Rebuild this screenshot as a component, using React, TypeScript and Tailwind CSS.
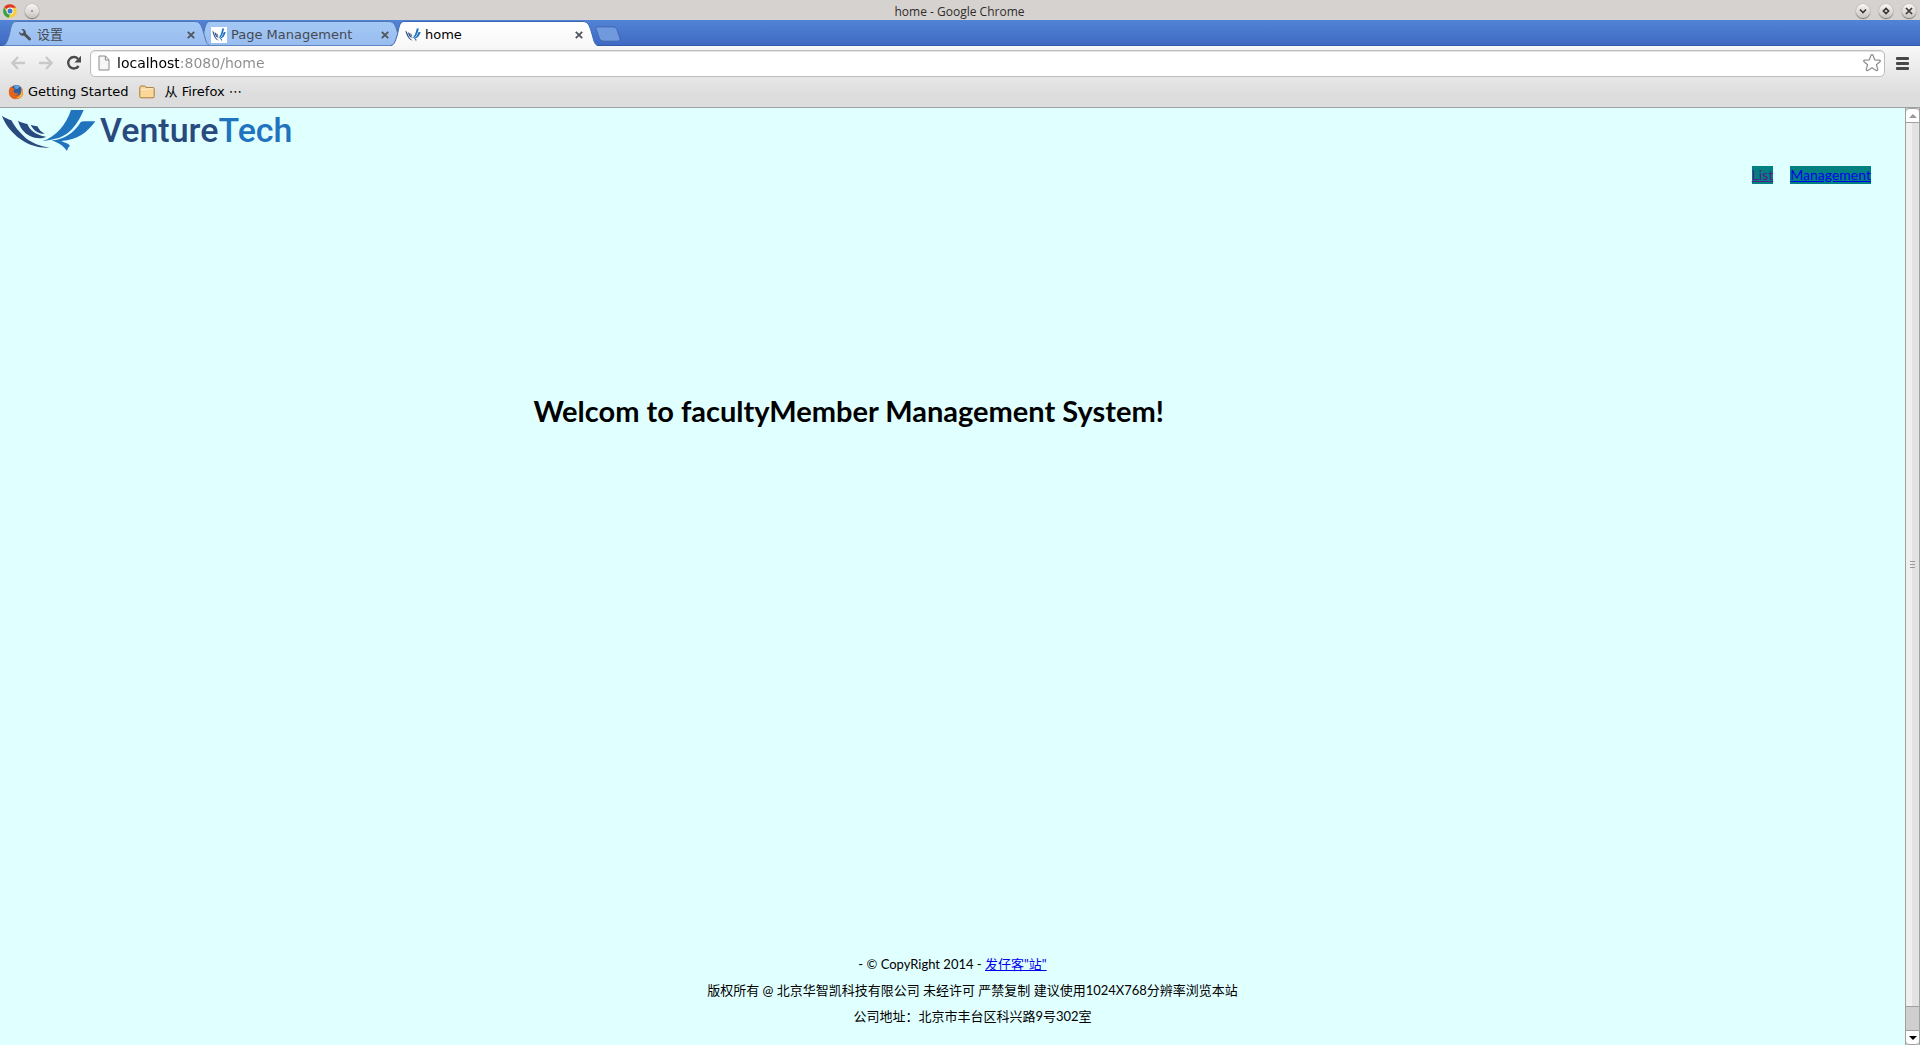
import React, { useState } from 'react';

function BirdMark({ className, stretch }: { className: string; stretch?: boolean }) {
  return (
    <svg viewBox="0 9 291 135" preserveAspectRatio={stretch ? 'none' : 'xMidYMid meet'} className={className} aria-hidden="true">
      <g fill="#284a7e">
        <path d="M6 32 C14 38 24 42 34 46 C42 62 56 80 76 98 C96 114 120 123 149 128 C118 130 88 122 62 103 C36 84 16 60 6 32Z" />
        <path d="M54 47 C62 53 74 54 82 57 C90 76 106 90 138 95 C128 101 108 102 90 93 C72 84 60 68 54 47Z" />
        <path d="M92 59 C98 62 106 62 112 64 C117 74 124 82 134 86 C120 88 100 78 92 59Z" />
      </g>
      <g fill="#1f74bd">
        <path d="M213 15 L251 15 C236 52 212 86 178 98 C162 103 144 105 127 109 C168 94 198 60 213 15Z" />
        <path d="M243 50 C256 48 272 49 286 49 C262 82 232 106 184 108 C194 114 204 114 210 122 C204 127 203 132 201 138 C190 121 172 112 154 106 C192 104 222 84 243 50Z" />
      </g>
    </svg>
  );
}

function ChromeIcon() {
  return (
    <svg viewBox="0 0 16 16" className="h-3.5 w-3.5" aria-hidden="true">
      <circle cx="8" cy="8" r="7.8" fill="#f8cf3a" />
      <path d="M8 8 L1.2 4 A7.8 7.8 0 0 1 14.8 4.4 L8 4.4Z" fill="#e0392b" />
      <path d="M1.2 4 L5 10 L8 11.6 L6.6 15.7 A7.8 7.8 0 0 1 1.2 4Z" fill="#38a146" />
      <circle cx="8" cy="8" r="3.9" fill="#fff" />
      <circle cx="8" cy="8" r="2.9" fill="#3c7bd0" />
    </svg>
  );
}

function WindowButton({ label, children }: { label: string; children: React.ReactNode }) {
  return (
    <button
      type="button"
      aria-label={label}
      className="flex h-3.5 w-3.5 items-center justify-center rounded-full bg-linear-to-b from-[#f8f7f6] to-[#c9c5c1] shadow-[0_1px_1px_#77726e,0_0_1px_#77726e]"
    >
      <svg viewBox="0 0 14 14" className="h-3.5 w-3.5" fill="none" stroke="#3a3a3a" strokeWidth="1.7" aria-hidden="true">
        {children}
      </svg>
    </button>
  );
}

function WrenchIcon() {
  return (
    <svg viewBox="0 0 16 16" className="h-4 w-4" aria-hidden="true">
      <path
        d="M4.2 2.2 C6.8 1.4 9.4 3.6 8.9 6.4 L13.8 11.2 C14.8 12.4 13 14.2 11.8 13.3 L6.8 8.6 C4.2 9.4 1.8 7.4 2 4.8 L4.3 6.6 L6.2 6 L6.4 4Z"
        fill="#4d5257"
      />
    </svg>
  );
}

type TabProps = { title: string; icon: React.ReactNode; active?: boolean; layer: string; first?: boolean };

function Tab({ title, icon, active, layer, first }: TabProps) {
  return (
    <div className={`relative flex h-[26px] w-[207px] items-center pt-1 pr-[13px] pl-[14px] ${layer} ${first ? '' : '-ml-[13px]'}`}>
      <svg viewBox="0 0 207 26" preserveAspectRatio="none" className="absolute inset-0 -z-10 h-full w-full" aria-hidden="true">
        <defs>
          <linearGradient id="tab-on" x1="0" y1="0" x2="0" y2="1">
            <stop offset="0" stopColor="#ffffff" />
            <stop offset="1" stopColor="#f8f8f8" />
          </linearGradient>
          <linearGradient id="tab-off" x1="0" y1="0" x2="0" y2="1">
            <stop offset="0" stopColor="#a5c9f6" />
            <stop offset="1" stopColor="#97bcef" />
          </linearGradient>
        </defs>
        <path
          d="M0 26 C3 25 4 22 6 16 C8 9 8 1.5 13 1.5 H192 C198 1.5 199 8 201 14 C203 22 204 25 207 26Z"
          fill={active ? 'url(#tab-on)' : 'url(#tab-off)'}
        />
        <path
          d="M0 25.5 C3 25 4 22 6 16 C8 9 8 1.5 13 1.5 H192 C198 1.5 199 8 201 14 C203 22 204 25 207 25.5"
          fill="none"
          stroke={active ? '#3a66b4' : '#5178b4'}
        />
        {!active && <path d="M1 25.5 H206" stroke="#5f86c4" />}
      </svg>
      <span className="flex h-4 w-4 shrink-0 items-center justify-center">{icon}</span>
      <button type="button" className={`ml-1 flex-1 truncate text-left text-[13px] leading-5 ${active ? 'text-black' : 'text-[#454a52]'}`}>
        {title}
      </button>
      <button type="button" aria-label={`Close ${title}`} className="flex h-3 w-3 items-center justify-center">
        <svg viewBox="0 0 10 10" className="h-2.5 w-2.5" aria-hidden="true">
          <path d="M1.8 1.8 L8.2 8.2 M8.2 1.8 L1.8 8.2" stroke="#50555c" strokeWidth="1.8" />
        </svg>
      </button>
    </div>
  );
}

function FirefoxIcon() {
  return (
    <svg viewBox="0 0 16 16" className="h-4 w-4" aria-hidden="true">
      <circle cx="8" cy="8" r="7" fill="#e0661a" />
      <circle cx="8.6" cy="6.2" r="5.2" fill="#2c5fa8" />
      <path d="M6 1.8 C8 .8 10.5 1 12 2.4 L9.4 5 L7 4.4Z" fill="#5fa4dc" />
      <path d="M1.2 5 C1.8 4 2.4 3.2 3 2.6 L3.6 4 C5 3.8 6 4.4 6.8 5.2 L5.4 7 C6 9.6 9.4 9.6 11 8.6 C9.6 12 5 12.4 3 9.6 C4.6 14 11 14.4 13.6 10.2 C14.6 8 14.2 5.2 13.2 3.6 C15.6 6 15.6 10 13.6 12.6 C10 16.8 3.6 15.6 1.6 11.4 C.7 9.4 .6 7 1.2 5Z" fill="#e4641b" />
      <path d="M13.4 3.8 C15.3 6.4 15.2 9.8 13.2 12.2 C11.6 14 9.4 14.6 7.4 14.4 C11.8 13.4 14.2 9 13.4 3.8Z" fill="#f8c33c" />
    </svg>
  );
}

function FolderIcon() {
  return (
    <svg viewBox="0 0 16 14" className="h-3.5 w-4" aria-hidden="true">
      <path d="M.8 2.5 Q.8 1 2.2 1 H5.6 Q6.8 1 7 2.6 H14 Q15.2 2.6 15.2 3.8 V11.6 Q15.2 12.8 14 12.8 H2 Q.8 12.8 .8 11.6Z" fill="#fbd698" stroke="#a97b3c" />
      <path d="M1.8 4.6 H7 L8 3.8 H14.2" fill="none" stroke="#fff0cf" />
    </svg>
  );
}

function TitleBar() {
  return (
    <div className="grid h-5 grid-cols-[1fr_auto_1fr] items-center bg-[#d6d2cf] pr-1 pl-[3px]">
      <div className="flex items-center gap-2">
        <ChromeIcon />
        <WindowButton label="Pin window">
          <circle cx="7" cy="7" r=".5" strokeWidth=".6" />
        </WindowButton>
      </div>
      <div className='pt-0.5 font-["Open_Sans",sans-serif] text-xs leading-5 text-[#2f2c2a]'>home - Google Chrome</div>
      <div className="flex items-center justify-end gap-[9px]">
        <WindowButton label="Minimize">
          <path d="M4 5.5 L7 8.5 L10 5.5" />
        </WindowButton>
        <WindowButton label="Maximize">
          <path d="M7 4.4 L9.6 7 L7 9.6 L4.4 7Z" />
        </WindowButton>
        <WindowButton label="Close window">
          <path d="M4 4 L10 10 M10 4 L4 10" />
        </WindowButton>
      </div>
    </div>
  );
}

function Toolbar() {
  const [url, setUrl] = useState('localhost:8080/home');
  return (
    <div className="border-b border-[#a0a0a0] bg-linear-to-b from-[#f8f8f8] to-[#dddddd] to-80%">
      <div className="flex h-[34px] items-center pr-2.5 pl-[9px]">
        <div className="flex items-center gap-2.5">
          <button type="button" aria-label="Back" disabled>
            <svg viewBox="0 0 18 18" className="h-[18px] w-[18px]" fill="none" stroke="#c9c9c9" strokeWidth="2.4" aria-hidden="true">
              <path d="M16 9 H4 M9 3 L3.4 9 L9 15" />
            </svg>
          </button>
          <button type="button" aria-label="Forward" disabled>
            <svg viewBox="0 0 18 18" className="h-[18px] w-[18px]" fill="none" stroke="#c9c9c9" strokeWidth="2.4" aria-hidden="true">
              <path d="M2 9 H14 M9 3 L14.6 9 L9 15" />
            </svg>
          </button>
          <button type="button" aria-label="Reload">
            <svg viewBox="0 0 18 18" className="h-[18px] w-[18px]" aria-hidden="true">
              <path d="M13.6 12 A5.7 5.7 0 1 1 13 4.8" fill="none" stroke="#4b4b4b" strokeWidth="2.4" />
              <path d="M16 1.8 V8.4 H9.4Z" fill="#4b4b4b" />
            </svg>
          </button>
        </div>
        <div className="ml-[7px] flex h-[27px] flex-1 items-center rounded-[5px] border border-[#bcbcbc] bg-white pr-0.5 pl-[7px] shadow-[inset_0_1px_1px_#e4e4e4]">
          <svg viewBox="0 0 12 16" className="h-4 w-3 shrink-0" aria-hidden="true">
            <path d="M1 1 H7.5 L11 4.8 V15 H1Z" fill="#f6f6f6" stroke="#8a8a8a" />
            <path d="M7.3 1 V5 H11" fill="none" stroke="#8a8a8a" />
          </svg>
          <input
            type="text"
            aria-label="Address"
            value={url}
            onChange={(e) => setUrl(e.target.value)}
            className="ml-[7px] h-6 min-w-0 flex-1 bg-linear-to-r from-black from-[62px] to-[#8c8c8c] to-[62px] bg-clip-text text-sm text-transparent caret-black outline-none"
          />
          <button type="button" aria-label="Bookmark this page">
            <svg viewBox="0 0 20 20" className="h-5 w-5" fill="#fff" stroke="#8b8b8b" strokeWidth="1.2" strokeLinejoin="round" aria-hidden="true">
              <path d="M10 1.6 Q10.8 1.6 11.2 2.7 L12.8 7 L17.4 7.2 Q19 7.6 18 8.8 L14.4 11.7 L15.7 16.2 Q15.8 18 14.2 17.4 L10 14.8 L5.8 17.4 Q4.2 18 4.3 16.2 L5.6 11.7 L2 8.8 Q1 7.6 2.6 7.2 L7.2 7 L8.8 2.7 Q9.2 1.6 10 1.6Z" />
            </svg>
          </button>
        </div>
        <button type="button" aria-label="Menu" className="ml-[11px]">
          <svg viewBox="0 0 14 14" className="h-3.5 w-3.5" fill="#474747" aria-hidden="true">
            <rect y="1" width="13" height="3" rx="1" />
            <rect y="6" width="13" height="3" rx="1" />
            <rect y="11" width="13" height="3" rx="1" />
          </svg>
        </button>
      </div>
      <div className="flex h-[27px] items-center gap-2.5 pb-[3px] pl-2 text-[13px] leading-5 text-black">
        <button type="button" className="flex items-center gap-1">
          <FirefoxIcon />
          Getting Started
        </button>
        <button type="button" className="flex items-center gap-2.5">
          <FolderIcon />
          从 Firefox ⋯
        </button>
      </div>
    </div>
  );
}

function ScrollBar() {
  return (
    <div className="flex w-[15px] shrink-0 flex-col border-x border-[#a0a0a0] bg-[#cfcfcf]" aria-hidden="true">
      <div className="flex h-[15px] items-center justify-center rounded-t-sm border-y border-[#a0a0a0] bg-white">
        <svg viewBox="0 0 8 4" className="h-1 w-2">
          <path d="M4 0 L8 4 H0Z" fill="#9a9a9a" />
        </svg>
      </div>
      <div className="flex flex-1 flex-col items-center justify-center gap-0.5 bg-linear-to-r from-[#f0f0f0] from-50% to-[#e2e2e2] to-50%">
        <span className="h-px w-[5px] bg-[#999]" />
        <span className="h-px w-[5px] bg-[#999]" />
        <span className="h-px w-[5px] bg-[#999]" />
      </div>
      <div className="h-6 border-t border-[#a0a0a0]" />
      <div className="flex h-[15px] items-center justify-center rounded-b-sm border-y border-[#a0a0a0] bg-white">
        <svg viewBox="0 0 8 4" className="h-1 w-2">
          <path d="M0 0 H8 L4 4Z" fill="#000" />
        </svg>
      </div>
    </div>
  );
}

export default function App() {
  return (
    <div className='flex min-h-screen flex-col font-["DejaVu_Sans","Noto_Sans_CJK_SC",sans-serif]'>
      <TitleBar />
      <div className="isolate flex h-[26px] border-b border-[#2f5aa8] bg-linear-to-b from-[#5284d6] to-[#3f69c3] pl-[3px]">
        <Tab first title="设置" icon={<WrenchIcon />} layer="z-20" />
        <Tab
          title="Page Management"
          icon={
            <span className="flex h-4 w-4 bg-white">
              <BirdMark stretch className="h-full w-full p-px" />
            </span>
          }
          layer="z-10"
        />
        <Tab active title="home" icon={<BirdMark stretch className="h-[14px] w-4" />} layer="z-30" />
        <button type="button" aria-label="New tab" className="-ml-1 flex items-center">
          <svg viewBox="0 0 28 16" className="mt-0.5 h-4 w-7" aria-hidden="true">
            <path d="M3.5 .8 H19 Q22 .8 23 3.6 L26 12.6 Q26.6 15.2 24 15.2 H9.5 Q6.6 15.2 5.4 12.4 L2 3 Q1.2 .8 3.5 .8Z" fill="#7199dd" stroke="#3f67b4" />
          </svg>
        </button>
      </div>
      <Toolbar />
      <div className='flex flex-1 font-["Lato","Noto_Sans_CJK_SC",sans-serif]'>
        <div className="flex min-w-0 flex-1 flex-col bg-[#e0ffff] text-black">
          <header>
            <div className="flex items-center">
              <BirdMark className="h-[45px] w-[97px]" />
              <div className='ml-[3px] font-["Roboto",sans-serif] text-[34px] leading-[45px] font-medium text-[#284a7e]'>
                Venture<span className="text-[#1f74bd]">Tech</span>
              </div>
            </div>
            <nav className="mt-[13px] flex justify-end gap-[17px] pr-[34px] text-sm leading-[18px]">
              <a href="#list" className="bg-[#008080] text-[#551a8b] underline">
                List
              </a>
              <a href="#management" className="bg-[#008080] text-[#0000ee] underline">
                Management
              </a>
            </nav>
          </header>
          <main className="flex-1 pt-[209px] pl-[28%]">
            <h1 className="text-[29px] leading-9 font-bold">Welcom to facultyMember Management System!</h1>
          </main>
          <footer className="pb-4 text-center text-[13px] leading-[26px]">
            <p>
              - © CopyRight 2014 -{' '}
              <a href="#site" className="text-[#0000ee] underline">
                发仔客"站"
              </a>
            </p>
            <p className="pl-10">版权所有 @ 北京华智凯科技有限公司 未经许可 严禁复制 建议使用1024X768分辨率浏览本站</p>
            <p className="pl-10">公司地址：北京市丰台区科兴路9号302室</p>
          </footer>
        </div>
        <ScrollBar />
      </div>
    </div>
  );
}
